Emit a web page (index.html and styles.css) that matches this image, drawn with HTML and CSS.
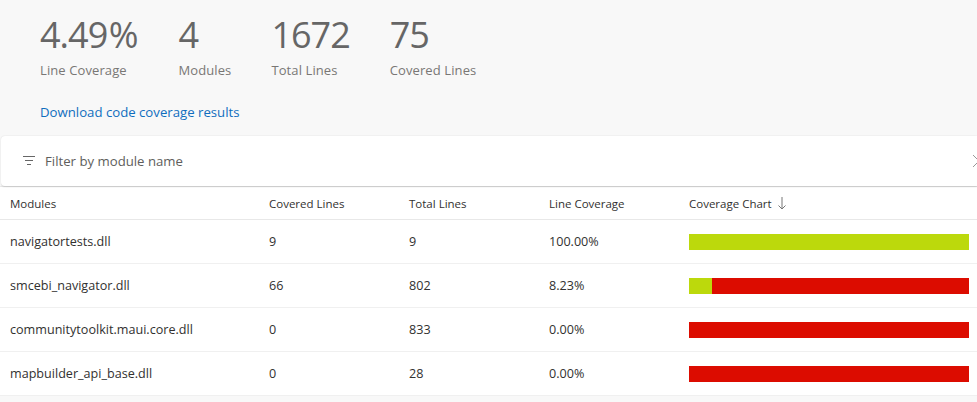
FILE: index.html
```html
<!DOCTYPE html>
<html>
<head>
<meta charset="utf-8">
<link rel="stylesheet" href="styles.css">
</head>
<body>
<div class="summary">
  <div class="stats">
    <div class="stat"><div class="num">4.49<span class="unit">%</span></div><div class="label">Line Coverage</div></div>
    <div class="stat"><div class="num">4</div><div class="label">Modules</div></div>
    <div class="stat"><div class="num">1672</div><div class="label">Total Lines</div></div>
    <div class="stat"><div class="num">75</div><div class="label">Covered Lines</div></div>
  </div>
  <a class="download" href="#">Download code coverage results</a>
</div>
<div class="filter">
  <svg class="ficon" width="12" height="10" viewBox="0 0 12 10"><path d="M0 0.5H12M2 4.5H10M4 8.5H8" stroke="#666" stroke-width="1"/></svg>
  <span class="ftext">Filter by module name</span>
  <svg class="chev" width="8" height="14" viewBox="0 0 8 14"><path d="M1 1L7 7L1 13" fill="none" stroke="#999" stroke-width="1"/></svg>
</div>
<div class="table">
  <div class="row head">
    <div class="c">Modules</div>
    <div class="c">Covered Lines</div>
    <div class="c">Total Lines</div>
    <div class="c">Line Coverage</div>
    <div class="c sort">Coverage Chart <svg class="arrow" width="8" height="13" viewBox="0 0 8 13"><path d="M4 0V12M0.5 8.5L4 12L7.5 8.5" fill="none" stroke="#777" stroke-width="1"/></svg></div>
  </div>
  <div class="row">
    <div class="c">navigatortests.dll</div><div class="c">9</div><div class="c">9</div><div class="c">100.00%</div>
    <div class="c"><div class="bar"><div class="green" style="width:100%"></div></div></div>
  </div>
  <div class="row">
    <div class="c">smcebi_navigator.dll</div><div class="c">66</div><div class="c">802</div><div class="c">8.23%</div>
    <div class="c"><div class="bar"><div class="green" style="width:8.23%"></div></div></div>
  </div>
  <div class="row">
    <div class="c">communitytoolkit.maui.core.dll</div><div class="c">0</div><div class="c">833</div><div class="c">0.00%</div>
    <div class="c"><div class="bar"><div class="green" style="width:0%"></div></div></div>
  </div>
  <div class="row">
    <div class="c">mapbuilder_api_base.dll</div><div class="c">0</div><div class="c">28</div><div class="c">0.00%</div>
    <div class="c"><div class="bar"><div class="green" style="width:0%"></div></div></div>
  </div>
</div>
</body>
</html>
```
FILE: styles.css
```css
html, body { margin: 0; padding: 0; }
body {
  background: #f8f8f8;
  font-family: "Open Sans", "Noto Sans", sans-serif;
  color: #323130;
  width: 977px;
  height: 402px;
  overflow: hidden;
}
.summary { padding: 13px 40px 0; }
.stats { display: flex; gap: 40px; }
.num { font-size: 36px; line-height: 44px; color: #666; letter-spacing: -1px; }
.unit { margin-left: 1.5px; letter-spacing: 0; }
.label { font-size: 13px; line-height: 18px; color: #797775; margin-top: 4px; letter-spacing: 0.1px; }
.download {
  display: inline-block;
  margin-top: 24px;
  font-size: 13.2px;
  line-height: 18px;
  color: #106ebe;
  text-decoration: none;
}
.filter {
  margin: 14px 0 0 1px;
  height: 50px;
  background: #fff;
  border-radius: 4px 0 0 4px;
  box-shadow: 0 0.5px 1.5px rgba(0,0,0,0.14);
  display: flex;
  align-items: center;
  position: relative;
}
.ficon { margin-left: 22px; }
.ftext { margin-left: 10px; font-size: 13.2px; color: #605e5c; }
.chev { position: absolute; right: -3px; top: 18px; }
.table { background: #fff; border-top: 1px solid #e8e8e8; }
.row {
  display: grid;
  grid-template-columns: 259px 140px 140px 140px 1fr;
  height: 44px;
  align-items: center;
  border-bottom: 1px solid #f0f0f0;
  box-sizing: border-box;
  font-size: 12.6px;
}
.row.head { height: 33px; font-size: 11.5px; border-bottom: 1px solid #e8e8e8; }
.c { padding-left: 10px; white-space: nowrap; }
.sort { display: flex; align-items: center; }
.arrow { margin-left: 6px; }
.bar { width: 280px; height: 16px; background: #dc0c00; display: flex; }
.green { background: #bcd90c; height: 100%; }
```
